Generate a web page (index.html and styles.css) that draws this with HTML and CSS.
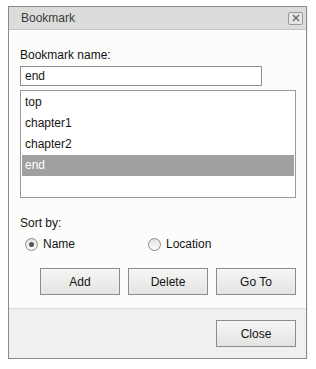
FILE: index.html
```html
<!DOCTYPE html>
<html>
<head>
<meta charset="utf-8">
<link rel="stylesheet" href="styles.css">
</head>
<body>
<div class="dialog">
  <div class="header">
    <span class="title">Bookmark</span>
    <span class="close-x"><svg width="10" height="8" viewBox="0 0 10 8"><path d="M2 1 L8 7 M8 1 L2 7" stroke="#707070" stroke-width="1.6" fill="none"/></svg></span>
  </div>
  <div class="content">
    <div class="label">Bookmark name:</div>
    <div class="input">end</div>
    <div class="list">
      <div class="item">top</div>
      <div class="item">chapter1</div>
      <div class="item">chapter2</div>
      <div class="item selected">end</div>
    </div>
    <div class="label sort">Sort by:</div>
    <div class="radios">
      <div class="radio-opt"><span class="radio checked"></span><span>Name</span></div>
      <div class="radio-opt"><span class="radio"></span><span>Location</span></div>
    </div>
    <div class="buttons">
      <div class="btn">Add</div>
      <div class="btn">Delete</div>
      <div class="btn">Go To</div>
    </div>
  </div>
  <div class="footer">
    <div class="btn">Close</div>
  </div>
</div>
</body>
</html>
```
FILE: styles.css
```css
html, body { background: #ffffff; }
body {
  margin: 6px 8px;
  font-family: "Liberation Sans", Arial, sans-serif;
  font-size: 12px;
  color: #141414;
}
.dialog {
  width: 297px;
  border: 1px solid #8a8a8a;
  background: #fcfdfb;
  box-shadow: 0 0 6px rgba(0,0,0,0.12);
}
.header {
  height: 22px;
  background: #dcdddb;
  border-bottom: 1px solid #c4c4c4;
  display: flex;
  align-items: center;
  justify-content: space-between;
  padding: 0 3px 0 12px;
}
.title { color: #3a3a3a; font-size: 12px; }
.close-x {
  width: 13px;
  height: 11px;
  border: 1px solid #9a9a9a;
  border-radius: 2px;
  background: #e6e6e4;
  display: flex;
  align-items: center;
  justify-content: center;
}
.content {
  padding: 17px 10px 13px 11px;
}
.label { line-height: 16px; height: 16px; }
.input {
  margin-top: 3px;
  width: 242px;
  height: 20px;
  box-sizing: border-box;
  border: 1px solid #8f8f8f;
  background: #fff;
  padding-left: 4px;
  line-height: 18px;
}
.list {
  margin-top: 4px;
  height: 108px;
  box-sizing: border-box;
  border: 1px solid #9a9a9a;
  background: #fff;
  padding: 1px;
}
.item {
  height: 21px;
  line-height: 21px;
  padding-left: 3px;
}
.item.selected { background: #a0a09e; color: #fff; }
.sort { margin-top: 17px; }
.radios {
  margin-top: 5px;
  height: 16px;
  display: grid;
  grid-template-columns: 123px 1fr;
  padding-left: 5px;
}
.radio-opt { display: flex; align-items: center; gap: 5px; }
.radio {
  width: 11px;
  height: 11px;
  border: 1px solid #8a8a8a;
  border-radius: 50%;
  background: linear-gradient(#e2e2e2, #fafafa);
  display: flex;
  align-items: center;
  justify-content: center;
}
.radio.checked::after {
  content: "";
  width: 5px;
  height: 5px;
  border-radius: 50%;
  background: #555;
}
.buttons {
  margin-top: 16px;
  display: flex;
  justify-content: flex-end;
  gap: 8px;
}
.btn {
  width: 80px;
  height: 27px;
  box-sizing: border-box;
  border: 1px solid #8c8c8c;
  background: linear-gradient(#f6f6f5, #e3e3e2);
  display: flex;
  align-items: center;
  justify-content: center;
  color: #141414;
}
.footer {
  border-top: 1px solid #dcdcdc;
  background: #f0f0ee;
  padding: 11px 10px 11px 0;
  display: flex;
  justify-content: flex-end;
}
```
